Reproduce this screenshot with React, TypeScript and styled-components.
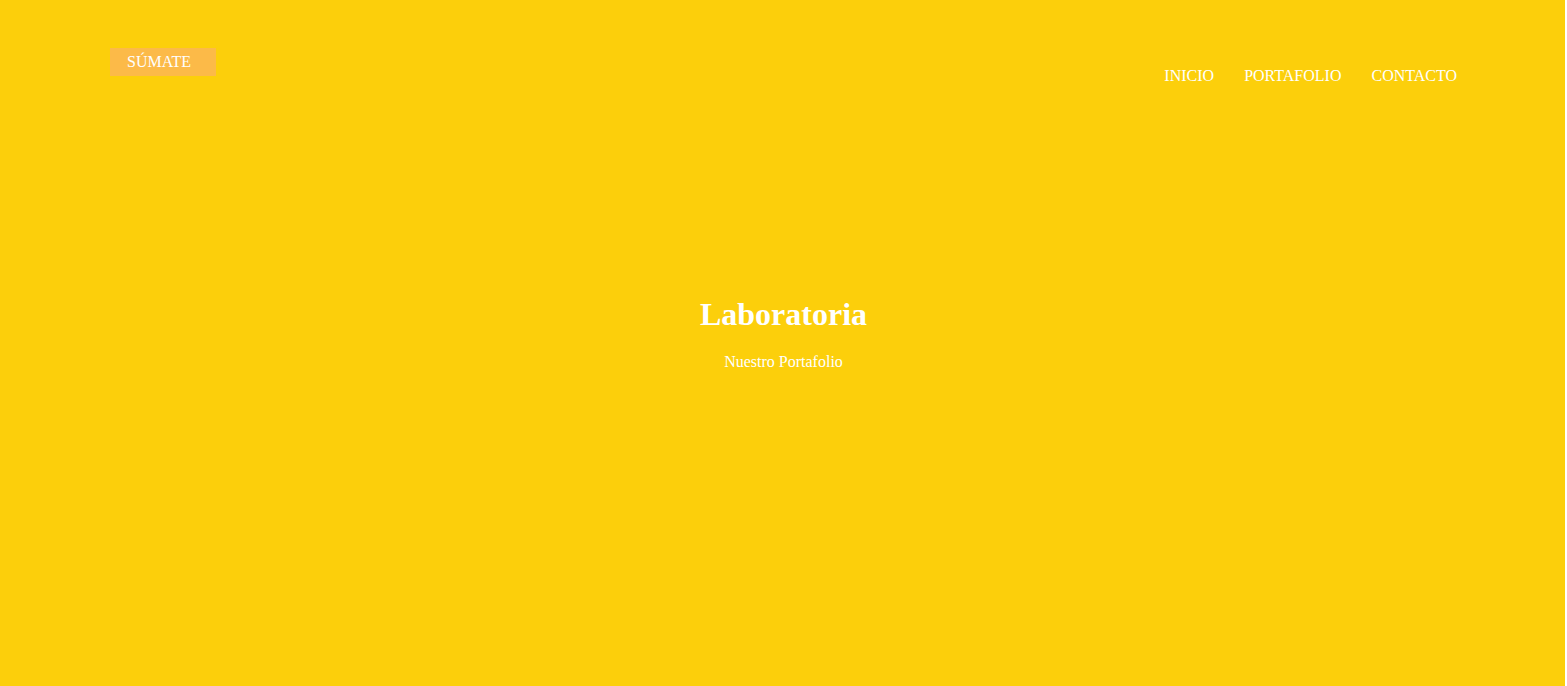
import React from "react";
import styled, { createGlobalStyle } from "styled-components";

const Global = createGlobalStyle`
  html, body { margin: 0; padding: 0; background: #ffffff; }
  body { font-family: "Liberation Serif", "Times New Roman", serif; }
`;

const Hero = styled.section`
  width: calc(100% - 2px);
  height: 686px;
  background: #fccf0b;
  display: flex;
  flex-direction: column;
  box-sizing: border-box;
  padding: 48px 108px 0 110px;
  color: #ffffff;
`;

const TopBar = styled.header`
  display: flex;
  justify-content: space-between;
  align-items: flex-start;
`;

const JoinButton = styled.a`
  display: block;
  width: 106px;
  height: 28px;
  box-sizing: border-box;
  padding: 4px 0 0 17px;
  background: #fcba48;
  color: #ffffff;
  font-size: 16px;
  line-height: 20px;
  text-decoration: none;
`;

const Nav = styled.nav`
  display: flex;
  gap: 30px;
  margin-top: 18px;
`;

const NavLink = styled.a`
  color: #ffffff;
  font-size: 16px;
  line-height: 20px;
  text-decoration: none;
`;

const Center = styled.div`
  display: flex;
  flex-direction: column;
  align-items: center;
  margin-top: 208px;
`;

const Title = styled.h1`
  margin: 0;
  font-size: 32px;
  font-weight: bold;
  line-height: 40px;
`;

const Subtitle = styled.p`
  margin: 19px 0 0;
  font-size: 16px;
  line-height: 18px;
`;

export default function App() {
  return (
    <>
      <Global />
      <Hero>
        <TopBar>
          <JoinButton href="#">SÚMATE</JoinButton>
          <Nav>
            <NavLink href="#">INICIO</NavLink>
            <NavLink href="#">PORTAFOLIO</NavLink>
            <NavLink href="#">CONTACTO</NavLink>
          </Nav>
        </TopBar>
        <Center>
          <Title>Laboratoria</Title>
          <Subtitle>Nuestro Portafolio</Subtitle>
        </Center>
      </Hero>
    </>
  );
}
